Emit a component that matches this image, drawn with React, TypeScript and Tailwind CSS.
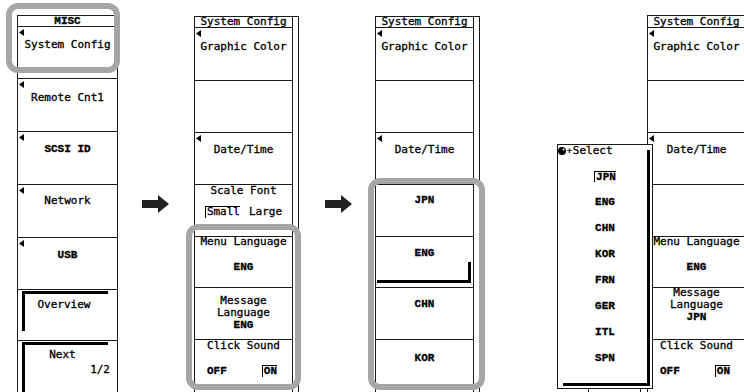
import React from "react";

const caps = "font-['Liberation_Mono',monospace] font-bold";

function Tri() {
  return (
    <svg width="5" height="7" viewBox="0 0 5 7" className="absolute left-[1px] top-[2px]">
      <polygon points="5,0 5,7 0,3.5" fill="#000" />
    </svg>
  );
}

function Key({ cls, arrow, children }: { cls: string; arrow?: boolean; children?: React.ReactNode }) {
  return (
    <div className={`relative flex flex-col items-center border-t border-[#1a1a1a] shrink-0 ${cls}`}>
      {arrow && <Tri />}
      {children}
    </div>
  );
}

function Arrow({ cls }: { cls: string }) {
  return (
    <svg width="27" height="18" viewBox="0 0 27 18" className={`shrink-0 mt-[195px] ${cls}`}>
      <polygon points="0,5 16,5 16,0 27,9 16,18 16,13 0,13" fill="#222" />
    </svg>
  );
}

function Boxed({ children, cls = "" }: { children: React.ReactNode; cls?: string }) {
  return <span className={`inline-block border-t border-l border-black leading-[10px] pl-[1px] ${cls}`}>{children}</span>;
}

function TopKeys() {
  return (
    <>
      <Key cls="h-[53px]" arrow>
        <div className="mt-[13px] leading-[12px]">Graphic Color</div>
      </Key>
      <Key cls="h-[52px]" />
      <Key cls="h-[52px]" arrow>
        <div className="mt-[11px] leading-[12px]">Date/Time</div>
      </Key>
    </>
  );
}

function ClickSound() {
  return (
    <Key cls="h-[60px]">
      <div className="leading-[11px]">Click Sound</div>
      <div className="mt-[14px] leading-[12px] self-stretch flex pl-[12px] gap-[35px]">
        <span className={caps}>OFF</span>
        <Boxed cls={caps}>ON</Boxed>
      </div>
    </Key>
  );
}

export default function App() {
  return (
    <div className="relative w-[744px] h-[392px] overflow-hidden bg-white text-black text-[11px] font-['DejaVu_Sans_Mono',monospace] [-webkit-text-stroke:0.3px_#000]">
      <div className="flex items-start">
        {/* Panel 1: MISC */}
        <div className="mt-[15px] ml-[17px] w-[101px] border-x border-t border-[#1a1a1a] flex flex-col shrink-0">
          <div className={`h-[10px] leading-[10px] text-center ${caps}`}>MISC</div>
          <Key cls="h-[52px]" arrow>
            <div className="mt-[12px] leading-[12px]">System Config</div>
          </Key>
          <Key cls="h-[53px]" arrow>
            <div className="mt-[13px] leading-[12px]">Remote Cnt1</div>
          </Key>
          <Key cls="h-[53px]" arrow>
            <div className={`mt-[11px] leading-[12px] ${caps}`}>SCSI ID</div>
          </Key>
          <Key cls="h-[53px]" arrow>
            <div className="mt-[10px] leading-[12px]">Network</div>
          </Key>
          <Key cls="h-[52px]" arrow>
            <div className={`mt-[11px] leading-[12px] ${caps}`}>USB</div>
          </Key>
          <Key cls="h-[51px]">
            <div className="self-stretch mt-[1px] ml-[4px] mr-[9px] h-[40px] border-t-[3px] border-l-[3px] border-black flex flex-col items-center pr-[5px]">
              <div className="mt-[5px] leading-[12px]">Overview</div>
            </div>
          </Key>
          <Key cls="h-[60px]">
            <div className="self-stretch mt-[1px] ml-[4px] mr-[9px] h-[60px] border-t-[3px] border-l-[3px] border-black flex flex-col">
              <div className="mt-[4px] leading-[12px] text-center pr-[8px]">Next</div>
              <div className="mt-[3px] leading-[12px] text-right -mr-[2px]">1/2</div>
            </div>
          </Key>
        </div>

        <Arrow cls="ml-[24px]" />

        {/* Panel 2 */}
        <div className="ml-[25px] mt-[16px] flex border-t border-x border-[#1a1a1a] shrink-0">
          <div className="w-[98px] border-r border-[#1a1a1a] flex flex-col">
            <div className="h-[10px] leading-[10px] text-center">System Config</div>
            <TopKeys />
            <Key cls="h-[52px]">
              <div className="leading-[11px]">Scale Font</div>
              <div className="mt-[10px] leading-[12px] flex gap-[9px]">
                <Boxed>Small</Boxed>
                <span>Large</span>
              </div>
            </Key>
            <Key cls="h-[51px]">
              <div className="-mt-[1px] leading-[11px]">Menu Language</div>
              <div className={`mt-[14px] leading-[12px] ${caps}`}>ENG</div>
            </Key>
            <Key cls="h-[52px]">
              <div className="mt-[7px] leading-[12px] text-center">
                Message
                <br />
                Language
                <br />
                <span className={caps}>ENG</span>
              </div>
            </Key>
            <ClickSound />
          </div>
          <div className="w-[5px]" />
        </div>

        <Arrow cls="ml-[26px]" />

        {/* Panel 3 */}
        <div className="ml-[23px] mt-[16px] flex border-t border-x border-[#1a1a1a] shrink-0">
          <div className="w-[98px] border-r border-[#1a1a1a] flex flex-col">
            <div className="h-[10px] leading-[10px] text-center">System Config</div>
            <TopKeys />
            <Key cls="h-[52px]">
              <div className={`mt-[9px] leading-[12px] ${caps}`}>JPN</div>
            </Key>
            <Key cls="h-[51px]">
              <div className={`mt-[10px] leading-[12px] ${caps}`}>ENG</div>
              <div className="self-stretch mt-[3px] ml-[1px] mr-[2px] h-[21px] border-r-[3px] border-b-[3px] border-black" />
            </Key>
            <Key cls="h-[52px]">
              <div className={`mt-[10px] leading-[12px] ${caps}`}>CHN</div>
            </Key>
            <Key cls="h-[60px]">
              <div className={`mt-[12px] leading-[12px] ${caps}`}>KOR</div>
            </Key>
          </div>
          <div className="w-[5px]" />
        </div>

        {/* Panel 4 */}
        <div className="ml-[167px] mt-[15px] flex border-t border-x border-[#1a1a1a] shrink-0">
          <div className="w-[98px] border-r border-[#1a1a1a] flex flex-col">
            <div className="h-[11px] leading-[11px] text-center">System Config</div>
            <TopKeys />
            <Key cls="h-[52px]" />
            <Key cls="h-[51px]">
              <div className="-mt-[1px] leading-[11px]">Menu Language</div>
              <div className={`mt-[14px] leading-[12px] ${caps}`}>ENG</div>
            </Key>
            <Key cls="h-[52px]">
              <div className="-mt-[1px] leading-[12px] text-center">
                Message
                <br />
                Language
                <br />
                <span className={caps}>JPN</span>
              </div>
            </Key>
            <ClickSound />
          </div>
          <div className="w-[5px]" />
        </div>
      </div>

      {/* Select popup */}
      <div className="absolute left-[557px] top-[144px] w-[96px] h-[245px] border border-[#1a1a1a] bg-white flex flex-col">
        <div className="absolute left-[5px] top-[5px] right-[2px] bottom-[2px] border-r-[3px] border-b-[3px] border-black" />
        <div className="h-[12px] flex items-center pl-[0px]">
          <svg width="8" height="8" viewBox="0 0 8 8" className="shrink-0">
            <circle cx="4" cy="4" r="4" fill="#000" />
            <circle cx="5.6" cy="2.4" r="1" fill="#fff" />
          </svg>
          <span className="text-[8px] leading-none mx-[1px]">+</span>
          <span className="leading-[12px]">Select</span>
        </div>
        <div className={`mt-[6px] flex flex-col ${caps}`}>
          {["JPN", "ENG", "CHN", "KOR", "FRN", "GER", "ITL", "SPN"].map((l, i) => (
            <div key={l} className="h-[26px] flex items-center justify-center">
              {i === 0 ? <Boxed>{l}</Boxed> : <span className="leading-[12px]">{l}</span>}
            </div>
          ))}
        </div>
      </div>
      <div className="absolute left-[588px] top-[389px] w-[1px] h-[3px] bg-[#1a1a1a]" />
      <div className="absolute left-[640px] top-[389px] w-[1px] h-[3px] bg-[#1a1a1a]" />

      {/* Grey highlights */}
      <div className="absolute left-[6px] top-[3px] w-[114px] h-[70px] border-[6px] border-[#a6a6a6] rounded-[12px] pointer-events-none" />
      <div className="absolute left-[186px] top-[224px] w-[115px] h-[166px] border-[6px] border-[#a6a6a6] rounded-[12px] pointer-events-none" />
      <div className="absolute left-[368px] top-[178px] w-[117px] h-[212px] border-[6px] border-[#a6a6a6] rounded-[12px] pointer-events-none" />
    </div>
  );
}
